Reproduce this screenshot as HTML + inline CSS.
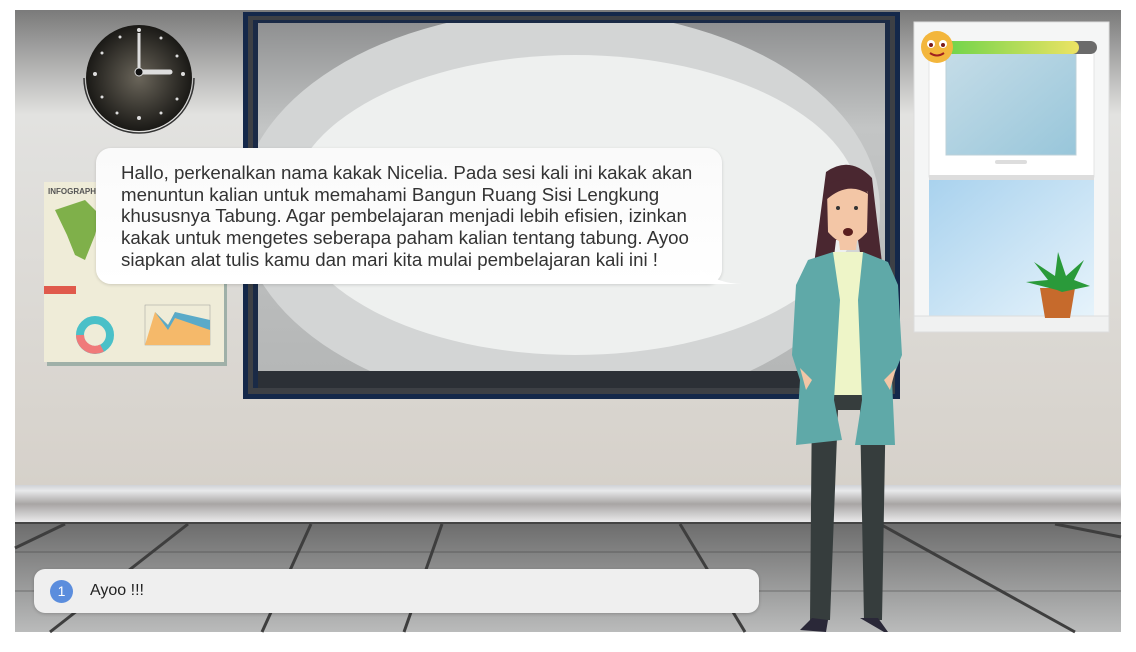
<!DOCTYPE html>
<html><head><meta charset="utf-8"><style>
html,body{margin:0;padding:0;background:#fff;width:1136px;height:652px;overflow:hidden}
svg{position:absolute;left:0;top:0}
.bubble{position:absolute;left:96px;top:148px;width:626px;height:136px;background:linear-gradient(#fafafa,#fff);border-radius:15px;box-shadow:0 1px 3px rgba(0,0,0,.15);box-sizing:border-box;padding:14px 0 0 25px;font:18.7px/21.7px "Liberation Sans",sans-serif;color:#333;white-space:nowrap}
.ans{position:absolute;left:34px;top:569px;width:725px;height:44px;background:#efefef;border-radius:11px;box-shadow:0 1px 3px rgba(0,0,0,.2);font:16px "Liberation Sans",sans-serif;color:#222}
.num{position:absolute;left:16px;top:11px;width:23px;height:23px;border-radius:50%;background:#5b8ddd;color:#fff;font-size:14px;text-align:center;line-height:23px}
.ans span.t{position:absolute;left:56px;top:13px}
</style></head><body>
<svg width="1136" height="652" viewBox="0 0 1136 652">
<defs>
<linearGradient id="wall" x1="0" y1="0" x2="0" y2="1"><stop offset="0" stop-color="#7a7a7a"/><stop offset=".22" stop-color="#e2e2e0"/><stop offset="1" stop-color="#d6d1ca"/></linearGradient>
<linearGradient id="base" x1="0" y1="0" x2="0" y2="1"><stop offset="0" stop-color="#d0d2d6"/><stop offset=".15" stop-color="#e8e9eb"/><stop offset=".5" stop-color="#a8a5a4"/><stop offset="1" stop-color="#eeeeef"/></linearGradient>
<linearGradient id="floor" x1="0" y1="0" x2="0" y2="1"><stop offset="0" stop-color="#6c6c6c"/><stop offset="1" stop-color="#babbbb"/></linearGradient>
<radialGradient id="clk" cx=".5" cy=".5" r=".5"><stop offset="0" stop-color="#6a655a"/><stop offset="1" stop-color="#1a1916"/></radialGradient>
<linearGradient id="sky" x1="0" y1="0" x2="1" y2="1"><stop offset="0" stop-color="#a9d2ee"/><stop offset="1" stop-color="#e6f3fb"/></linearGradient>
<linearGradient id="glass" x1="0" y1="0" x2="1" y2="1"><stop offset="0" stop-color="#c6dde8"/><stop offset="1" stop-color="#98c6da"/></linearGradient>
<linearGradient id="bar" x1="0" y1="0" x2="1" y2="0"><stop offset="0" stop-color="#6fd44a"/><stop offset="1" stop-color="#ede364"/></linearGradient>
<linearGradient id="surf" x1="0" y1="0" x2="0" y2="1"><stop offset="0" stop-color="#8f9091"/><stop offset=".3" stop-color="#c3c5c5"/><stop offset="1" stop-color="#b5b7b7"/></linearGradient>
<clipPath id="bc"><rect x="258" y="23" width="627" height="348"/></clipPath>
</defs>
<rect x="15" y="10" width="1106" height="476" fill="url(#wall)"/>
<rect x="15" y="485" width="1106" height="38" fill="url(#base)"/>
<rect x="15" y="522" width="1106" height="110" fill="url(#floor)"/>
<line x1="15" y1="523" x2="1121" y2="523" stroke="#444" stroke-width="2"/>
<line x1="15" y1="552" x2="1121" y2="552" stroke="#666" stroke-width="1.2"/>
<line x1="15" y1="591" x2="1121" y2="591" stroke="#777" stroke-width="1.2"/>
<g stroke="#3e3e3e" stroke-width="3">
<line x1="65" y1="524" x2="15" y2="548"/><line x1="188" y1="524" x2="50" y2="632"/>
<line x1="311" y1="524" x2="262" y2="632"/><line x1="442" y1="524" x2="404" y2="632"/>
<line x1="680" y1="524" x2="745" y2="632"/><line x1="880" y1="524" x2="1075" y2="632"/>
<line x1="1055" y1="524" x2="1121" y2="537"/>
</g>
<!-- board -->
<rect x="243" y="12" width="657" height="387" fill="#14284a"/>
<rect x="248" y="16" width="647" height="378" fill="#3d4045"/>
<rect x="253" y="20" width="637" height="368" fill="#1a2a46"/>
<rect x="258" y="23" width="627" height="348" fill="url(#surf)"/>
<g clip-path="url(#bc)">
<ellipse cx="560" cy="210" rx="320" ry="200" fill="#d3d5d5"/>
<ellipse cx="575" cy="205" rx="285" ry="150" fill="#eef0ef"/>
</g>
<rect x="258" y="371" width="627" height="17" fill="#2c3036"/>
<!-- clock -->
<path d="M84 78 A55 55 0 0 0 194 78" fill="none" stroke="#333" stroke-width="1.5"/>
<circle cx="139" cy="78" r="53" fill="url(#clk)"/>
<g fill="#ddd"><circle cx="139" cy="30" r="2"/><circle cx="139" cy="118" r="2"/><circle cx="95" cy="74" r="2"/><circle cx="183" cy="74" r="2"/>
<circle cx="161" cy="38" r="1.5"/><circle cx="177" cy="56" r="1.5"/><circle cx="177" cy="99" r="1.5"/><circle cx="161" cy="113" r="1.5"/><circle cx="117" cy="113" r="1.5"/><circle cx="102" cy="97" r="1.5"/><circle cx="102" cy="53" r="1.5"/><circle cx="120" cy="37" r="1.5"/></g>
<line x1="139" y1="72" x2="139" y2="33" stroke="#ddd" stroke-width="3"/>
<line x1="139" y1="72" x2="170" y2="72" stroke="#ddd" stroke-width="5" stroke-linecap="round"/>
<circle cx="139" cy="72" r="4" fill="#111" stroke="#ddd"/>
<!-- infographic -->
<rect x="47" y="186" width="180" height="180" fill="#9fb0a8"/>
<rect x="44" y="182" width="180" height="180" fill="#efecd8"/>
<text x="48" y="194" font-family="Liberation Sans" font-size="8" font-weight="bold" fill="#555">INFOGRAPHIC</text>
<path d="M55 210 l30 -10 l15 15 l-5 20 l-10 25 l-10 -5 l-8 -20 z" fill="#7fb04a"/>
<rect x="44" y="286" width="32" height="8" fill="#e05a4c"/>
<circle cx="95" cy="335" r="15" fill="none" stroke="#4ac0c8" stroke-width="8"/>
<path d="M80 335 a15 15 0 0 0 22 13" fill="none" stroke="#f07a7a" stroke-width="8"/>
<rect x="145" y="305" width="65" height="40" fill="none" stroke="#999" stroke-width=".5"/>
<path d="M145 345 L155 312 L168 325 L175 312 L210 330 L210 345 Z" fill="#f5b96a"/>
<path d="M155 312 L168 325 L175 312 L210 320 L210 330 L175 318 L168 330 Z" fill="#5aaac8"/>
<!-- window -->
<rect x="914" y="22" width="195" height="310" fill="#f5f6f6" stroke="#ddd"/>
<rect x="929" y="42" width="165" height="135" fill="#fff" stroke="#e4e4e4"/>
<rect x="946" y="47" width="130" height="108" fill="url(#glass)" stroke="#bcd0d8"/>
<rect x="995" y="160" width="32" height="4" rx="2" fill="#ddd"/>
<rect x="929" y="175" width="165" height="5" fill="#ddd"/>
<rect x="929" y="180" width="165" height="136" fill="url(#sky)"/>
<rect x="914" y="316" width="195" height="16" fill="#f0f1f1" stroke="#ddd"/>
<!-- plant -->
<path d="M1040 288 L1075 288 L1070 318 L1045 318 Z" fill="#c66a2c"/>
<g fill="#2a9a3a"><path d="M1057 290 L1026 282 L1048 280 L1034 262 L1055 276 L1058 252 L1066 276 L1084 260 L1074 280 L1090 286 L1062 292 Z"/></g>
<!-- bar -->
<rect x="947" y="41" width="150" height="13" rx="6.5" fill="#6b6b6b"/>
<rect x="947" y="41" width="132" height="13" rx="6.5" fill="url(#bar)"/>
<circle cx="937" cy="47" r="16" fill="#f3b63c"/>
<circle cx="931" cy="44" r="4" fill="#fff"/><circle cx="943" cy="44" r="4" fill="#fff"/>
<circle cx="931" cy="45" r="2" fill="#7a1a1a"/><circle cx="943" cy="45" r="2" fill="#7a1a1a"/>
<path d="M930 53 q7 5 14 0" fill="none" stroke="#a02020" stroke-width="2"/>
<!-- woman -->
<path d="M826 172 Q850 155 872 178 L884 280 L866 290 L858 240 L836 240 L830 290 L812 280 Z" fill="#4a2730"/>
<path d="M827 190 Q847 180 868 192 L867 232 Q848 255 828 232 Z" fill="#f3c6a6"/>
<path d="M826 186 Q848 170 870 195 Q848 180 826 200 Z" fill="#4a2730"/>
<path d="M838 232 L858 232 L856 250 L840 250 Z" fill="#f3c6a6"/>
<circle cx="838" cy="208" r="2" fill="#333"/><circle cx="856" cy="208" r="2" fill="#333"/>
<ellipse cx="848" cy="232" rx="5" ry="4" fill="#5a1e1e"/>
<path d="M833 252 L863 252 L862 400 L834 400 Z" fill="#eef5c8"/>
<path d="M810 620 L830 620 L838 410 L860 410 L864 620 L882 620 L886 395 L812 395 Z" fill="#363d3d"/>
<path d="M800 630 L826 632 L828 620 L812 618 Z M860 618 L884 632 L888 632 L878 618 Z" fill="#2a2838"/>
<path d="M808 260 L833 252 L840 300 L834 400 L842 440 L796 445 L800 380 L792 355 L796 285 Z" fill="#5fa9a8"/>
<path d="M888 262 L863 252 L858 300 L862 400 L855 445 L895 445 L892 380 L902 355 L898 285 Z" fill="#5fa9a8"/>
<path d="M800 368 L812 380 L806 390 Z M896 368 L884 380 L890 390 Z" fill="#f3c6a6"/>
</svg>
<div class="bubble">Hallo, perkenalkan nama kakak Nicelia. Pada sesi kali ini kakak akan<br>menuntun kalian untuk memahami Bangun Ruang Sisi Lengkung<br>khususnya Tabung. Agar pembelajaran menjadi lebih efisien, izinkan<br>kakak untuk mengetes seberapa paham kalian tentang tabung. Ayoo<br>siapkan alat tulis kamu dan mari kita mulai pembelajaran kali ini !</div>
<svg width="1136" height="652" style="pointer-events:none"><path d="M700 270 Q720 284 742 284 L700 284 Z" fill="#fff"/></svg>
<div class="ans"><div class="num">1</div><span class="t">Ayoo !!!</span></div>
</body></html>
